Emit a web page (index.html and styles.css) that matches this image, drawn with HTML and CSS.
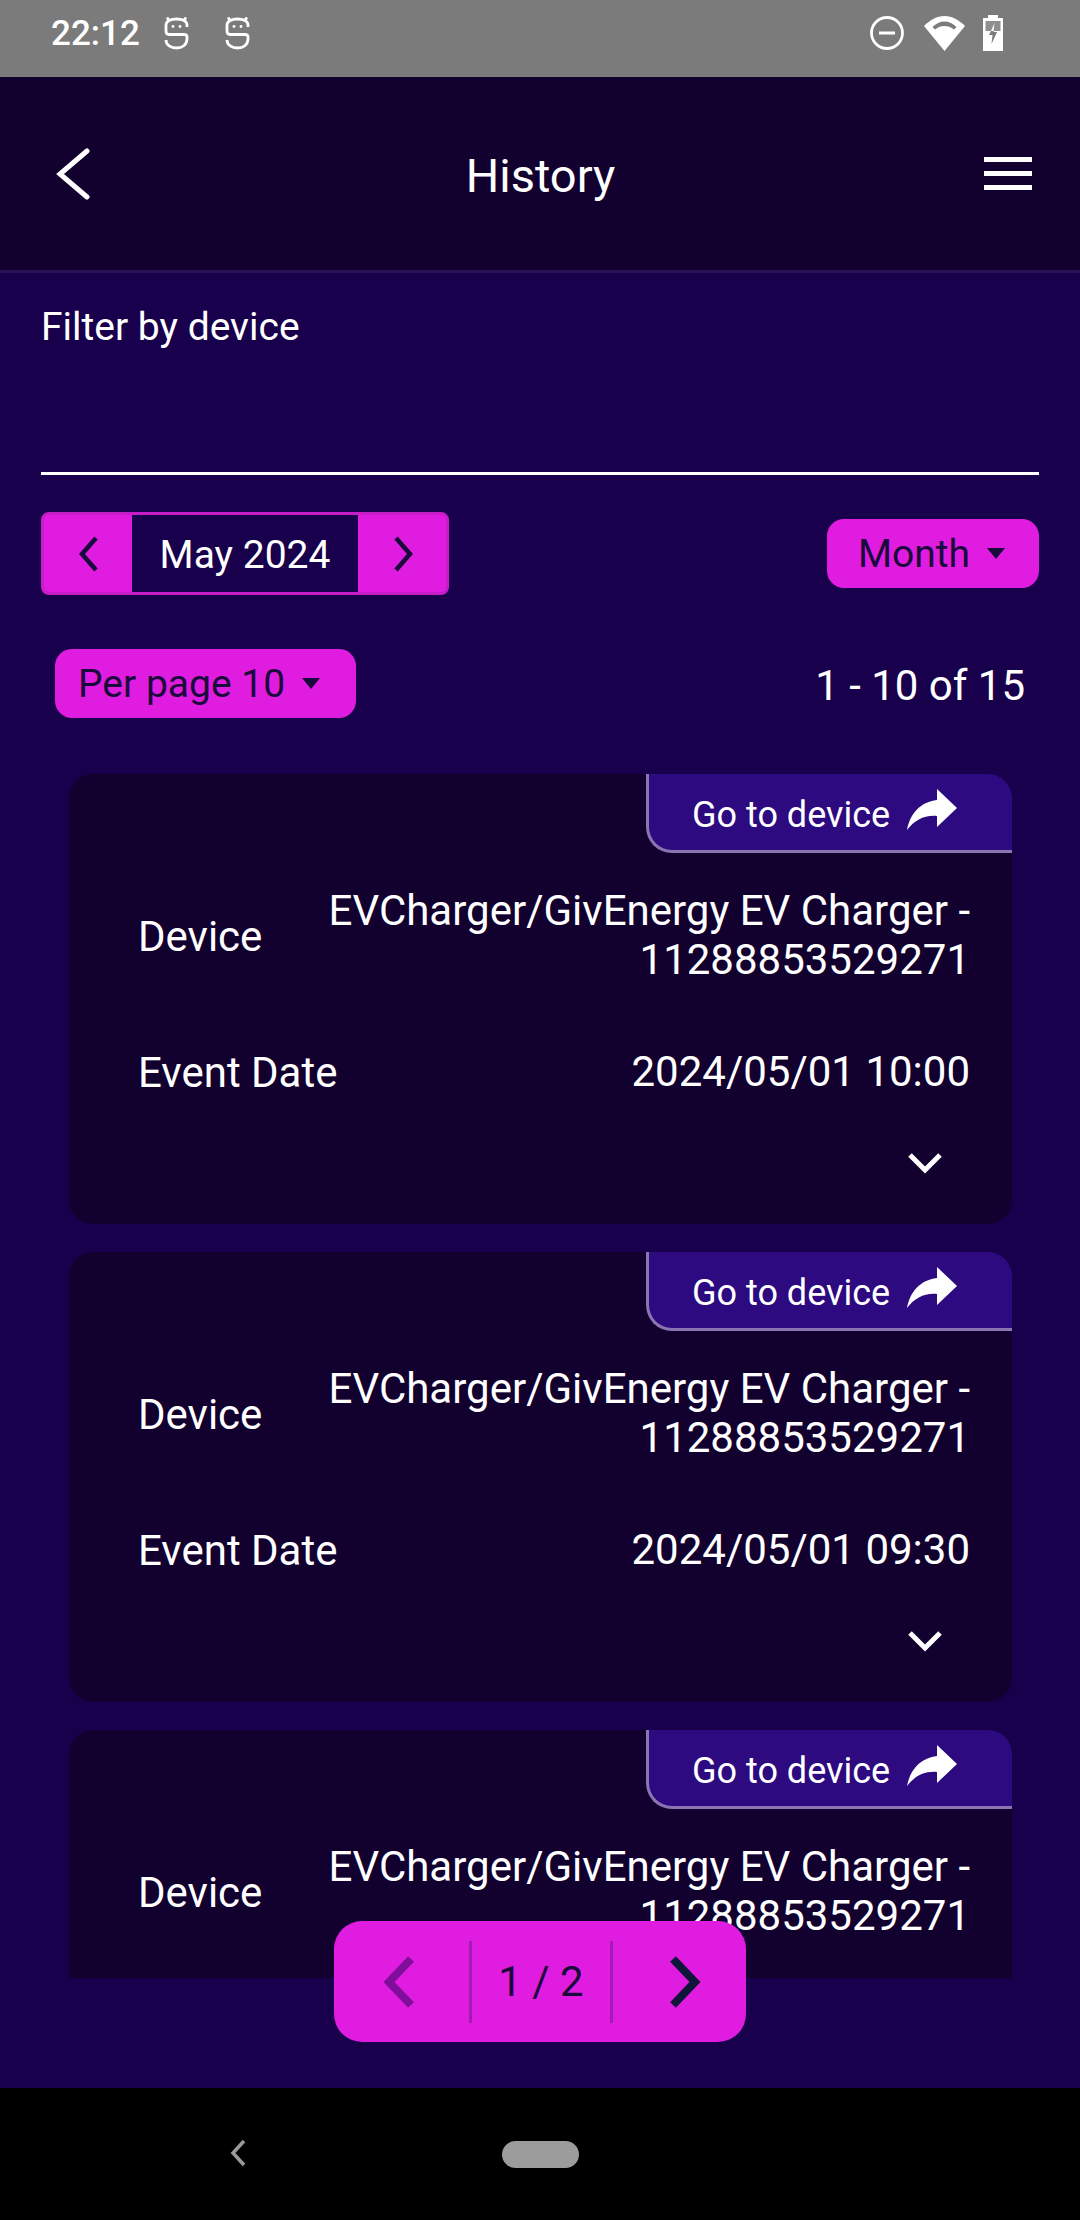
FILE: index.html
```html
<!DOCTYPE html>
<html lang="en">
<head>
    <meta charset="UTF-8">
    <title>History</title>
    <link rel="stylesheet" href="styles.css">
</head>
<body>
    <div class="app">
        <div class="status-bar">
            <span class="clock">22:12</span>
            <svg class="notif" viewBox="0 0 25 33"><path d="M23 10 V8 C23 4 18 2 12.500 2 C7 2 2 4 2 8 V14 C2 16.500 3 17.500 5 17.500 H20 C22 17.500 23 18.500 23 20 V22 C23 28 18 31 12.500 31 C7 31 2 28 2 23 M5 3 L3 0.500 M20 3 L22 0.500" fill="none" stroke="#fff" stroke-width="2.800"/><circle cx="9" cy="9.500" r="1.400" fill="#fff"/><circle cx="16" cy="9.500" r="1.400" fill="#fff"/></svg>
            <svg class="notif" viewBox="0 0 25 33"><path d="M23 10 V8 C23 4 18 2 12.500 2 C7 2 2 4 2 8 V14 C2 16.500 3 17.500 5 17.500 H20 C22 17.500 23 18.500 23 20 V22 C23 28 18 31 12.500 31 C7 31 2 28 2 23 M5 3 L3 0.500 M20 3 L22 0.500" fill="none" stroke="#fff" stroke-width="2.800"/><circle cx="9" cy="9.500" r="1.400" fill="#fff"/><circle cx="16" cy="9.500" r="1.400" fill="#fff"/></svg>
            <div class="status-right">
                <svg class="dnd" viewBox="0 0 34 34"><circle cx="17" cy="17" r="15.500" fill="none" stroke="#fff" stroke-width="2.800"/><rect x="9" y="15.500" width="16" height="3" fill="#fff"/></svg>
                <svg class="wifi" viewBox="0 0 41 35"><path d="M20.500 35 L0 10 C6 4 13 0 20.500 0 C28 0 35 4 41 10 Z" fill="#fff"/><path d="M8.500 11 C12 7.500 16 5.500 20.500 5.500 C25 5.500 29 7.500 32.500 11 L30 13.500 C27 11 24 10 20.500 10 C17 10 14 11 11 13.500 Z" fill="#7b7b7b"/></svg>
                <svg class="battery" viewBox="0 0 22 36"><path d="M6 0 H16 V3 H21 V36 H1 V3 H6 Z" fill="#fff"/><rect x="3.500" y="6" width="15" height="10" fill="#8f8f8f"/><path d="M12.500 8 L9 16 H11.600 Z" fill="#fff"/><path d="M9 16 L7 20 H10.500 L9.500 29 L15 17 H11.500 L11.600 16 Z" fill="#7b7b7b"/></svg>
            </div>
        </div>

        <header class="top-bar">
            <svg class="back" viewBox="0 0 36 52"><path d="M32 3 L5 26 L32 49" fill="none" stroke="#fff" stroke-width="5" stroke-linecap="round"/></svg>
            <h1>History</h1>
            <div class="burger"><i></i><i></i><i></i></div>
        </header>

        <main class="content">
            <div class="filter">
                <label>Filter by device</label>
                <div class="filter-input"></div>
            </div>

            <div class="row date-row">
                <div class="date-group">
                    <span class="date-btn"><svg viewBox="0 0 24 36"><path d="M20 2 L6 18 L20 34" fill="none" stroke="#190a3c" stroke-width="4.500"/></svg></span>
                    <span class="date-label">May 2024</span>
                    <span class="date-btn date-next"><svg viewBox="0 0 24 36"><path d="M4 2 L18 18 L4 34" fill="none" stroke="#190a3c" stroke-width="4.500"/></svg></span>
                </div>
                <span class="pill pill-wide">Month<i class="caret"></i></span>
            </div>

            <div class="row page-row">
                <span class="pill">Per page 10<i class="caret"></i></span>
                <span class="count">1 - 10 of 15</span>
            </div>

            <div class="list">
                <div class="card">
                    <a class="go-tab"><span class="go-text">Go to device</span>
                        <svg viewBox="0 0 50 41"><path d="M30 0 L50 19 L30 38 V27 C17 26 8 31 0 41 C3 25 13 13 30 11 Z" fill="#fff"/></svg>
                    </a>
                    <div class="field">
                        <span class="field-name">Device</span>
                        <span class="field-value">EVCharger/GivEnergy EV Charger - 11288853529271</span>
                    </div>
                    <div class="field">
                        <span class="field-name">Event Date</span>
                        <span class="field-value">2024/05/01 10:00</span>
                    </div>
                    <svg class="expand" viewBox="0 0 36 22"><path d="M3 3 L18 18 L33 3" fill="none" stroke="#fff" stroke-width="5"/></svg>
                </div>

                <div class="card">
                    <a class="go-tab"><span class="go-text">Go to device</span>
                        <svg viewBox="0 0 50 41"><path d="M30 0 L50 19 L30 38 V27 C17 26 8 31 0 41 C3 25 13 13 30 11 Z" fill="#fff"/></svg>
                    </a>
                    <div class="field">
                        <span class="field-name">Device</span>
                        <span class="field-value">EVCharger/GivEnergy EV Charger - 11288853529271</span>
                    </div>
                    <div class="field">
                        <span class="field-name">Event Date</span>
                        <span class="field-value">2024/05/01 09:30</span>
                    </div>
                    <svg class="expand" viewBox="0 0 36 22"><path d="M3 3 L18 18 L33 3" fill="none" stroke="#fff" stroke-width="5"/></svg>
                </div>

                <div class="card">
                    <a class="go-tab"><span class="go-text">Go to device</span>
                        <svg viewBox="0 0 50 41"><path d="M30 0 L50 19 L30 38 V27 C17 26 8 31 0 41 C3 25 13 13 30 11 Z" fill="#fff"/></svg>
                    </a>
                    <div class="field">
                        <span class="field-name">Device</span>
                        <span class="field-value">EVCharger/GivEnergy EV Charger - 11288853529271</span>
                    </div>
                </div>
            </div>

            <div class="pager">
                <span class="pager-btn pager-prev"><svg viewBox="0 0 34 54"><path d="M29 4 L7 27 L29 50" fill="none" stroke="#7f0f9a" stroke-width="8"/></svg></span>
                <span class="pager-num">1 / 2</span>
                <span class="pager-btn pager-next"><svg viewBox="0 0 34 54"><path d="M5 4 L27 27 L5 50" fill="none" stroke="#10153a" stroke-width="8"/></svg></span>
            </div>
        </main>

        <div class="nav-bar">
            <svg class="nav-back" viewBox="0 0 20 30"><path d="M16 3 L5 15 L16 27" fill="none" stroke="#9a9a9a" stroke-width="3.500"/></svg>
            <span class="nav-home"></span>
        </div>
    </div>
</body>
</html>
```

FILE: styles.css
```css
:root {
    --color-top: #12012f;
    --color-bg: #19004c;
    --color-card: #12012f;
    --color-accent: #e01ce0;
    --color-dark: #190a3c;
    --color-tab: #2d0a80;
}

* {
    box-sizing: border-box;
}

body {
    margin: 0;
    background-color: #000;
    font-family: 'Roboto', sans-serif;
    color: #fff;
}

.app {
    display: flex;
    flex-direction: column;
    width: 1080px;
    height: 2220px;
    overflow: hidden;
}

/* status bar */
.status-bar {
    display: flex;
    align-items: center;
    flex: none;
    height: 77px;
    padding: 0 76px 11px 51px;
    background-color: #7b7b7b;
}

.clock {
    font-size: 35px;
    font-weight: 500;
    margin-right: 24px;
}

.notif {
    width: 25px;
    height: 33px;
    margin-right: 36px;
}

.status-right {
    display: flex;
    align-items: center;
    margin-left: auto;
}

.dnd {
    width: 34px;
    height: 34px;
    margin-right: 20px;
}

.wifi {
    width: 41px;
    height: 35px;
    margin-right: 17px;
}

.battery {
    width: 22px;
    height: 36px;
}

/* top bar */
.top-bar {
    display: flex;
    align-items: center;
    justify-content: space-between;
    flex: none;
    height: 196px;
    padding: 0 48px 0 55px;
    background-color: var(--color-top);
    border-bottom: 3px solid #2a1259;
}

.top-bar h1 {
    margin: 4px 0 0 6px;
    font-size: 47px;
    font-weight: 400;
}

.back {
    width: 36px;
    height: 52px;
}

.burger {
    display: flex;
    flex-direction: column;
    gap: 9px;
    width: 48px;
}

.burger i {
    display: block;
    height: 5px;
    background-color: #fff;
}

/* content */
.content {
    position: relative;
    flex: 1;
    padding: 0 41px;
    background-color: var(--color-bg);
}

.filter label {
    display: block;
    padding-top: 32px;
    font-size: 39px;
    line-height: 44px;
}

.filter-input {
    height: 126px;
    border-bottom: 3px solid #fff;
}

.row {
    display: flex;
    align-items: center;
    justify-content: space-between;
}

.date-row {
    margin-top: 37px;
}

.date-group {
    display: flex;
    height: 83px;
    border: 3px solid #c91cc9;
    border-radius: 8px;
    background-color: var(--color-accent);
}

.date-btn {
    display: flex;
    align-items: center;
    justify-content: center;
    width: 88px;
}

.date-next {
    padding-left: 4px;
}

.date-btn svg {
    width: 24px;
    height: 36px;
}

.date-label {
    display: flex;
    align-items: center;
    justify-content: center;
    width: 226px;
    padding-top: 3px;
    background-color: var(--color-bg);
    font-size: 39px;
}

.pill {
    display: inline-flex;
    align-items: center;
    height: 69px;
    padding: 0 36px 0 23px;
    border-radius: 17px;
    background-color: var(--color-accent);
    color: var(--color-dark);
    font-size: 39px;
}

.pill-wide {
    padding: 0 34px 0 31px;
}

.caret {
    width: 0;
    height: 0;
    margin-left: 17px;
    border-left: 9px solid transparent;
    border-right: 9px solid transparent;
    border-top: 11px solid var(--color-dark);
}

.page-row {
    margin-top: 54px;
    padding: 0 14px;
}

.count {
    padding-top: 4px;
    font-size: 42px;
}

/* cards */
.list {
    display: flex;
    flex-direction: column;
    gap: 28px;
    height: 1204px;
    margin: 56px -41px 0;
    padding: 0 68px 0 69px;
    overflow: hidden;
}

.card {
    position: relative;
    flex: none;
    height: 450px;
    padding: 112px 42px 0 69px;
    border-radius: 24px;
    background-color: var(--color-card);
}

.go-tab {
    position: absolute;
    top: 0;
    right: 0;
    display: flex;
    align-items: center;
    gap: 17px;
    width: 366px;
    height: 79px;
    padding-left: 43px;
    border-left: 3px solid #8a75b0;
    border-bottom: 3px solid #8a75b0;
    border-radius: 0 24px 0 26px;
    background-color: var(--color-tab);
    font-size: 36px;
}

.go-text {
    padding-top: 6px;
}

.go-tab svg {
    width: 50px;
    height: 41px;
    margin-bottom: 5px;
}

.field {
    display: flex;
    align-items: center;
    justify-content: space-between;
    gap: 40px;
    margin-bottom: 62px;
}

.field-name {
    flex: none;
    padding-top: 2px;
    font-size: 42px;
}

.field-value {
    font-size: 42px;
    line-height: 49px;
    text-align: right;
}

.expand {
    position: absolute;
    right: 69px;
    bottom: 50px;
    width: 36px;
    height: 22px;
}

/* floating pager */
.pager {
    position: absolute;
    left: 334px;
    bottom: 46px;
    display: flex;
    align-items: center;
    width: 412px;
    height: 121px;
    border-radius: 28px;
    background-color: var(--color-accent);
    color: var(--color-dark);
}

.pager-btn {
    display: flex;
    align-items: center;
    justify-content: center;
    height: 100%;
}

.pager-prev {
    flex: none;
    width: 135px;
    padding-right: 6px;
}

.pager-next {
    flex: 1;
    padding-left: 11px;
}

.pager-btn svg {
    width: 34px;
    height: 54px;
}

.pager-num {
    flex: none;
    width: 144px;
    height: 82px;
    border-left: 3px solid #a31bb5;
    border-right: 3px solid #a31bb5;
    font-size: 42px;
    line-height: 82px;
    text-align: center;
}

/* android nav */
.nav-bar {
    position: relative;
    display: flex;
    align-items: center;
    justify-content: center;
    flex: none;
    height: 132px;
    background-color: #000;
}

.nav-back {
    position: absolute;
    left: 228px;
    top: 50px;
    width: 20px;
    height: 30px;
}

.nav-home {
    width: 77px;
    height: 27px;
    border-radius: 14px;
    background-color: #9c9c9c;
}
```
